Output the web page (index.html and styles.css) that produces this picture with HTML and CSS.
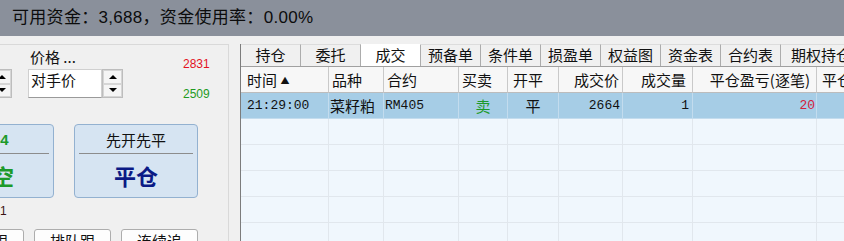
FILE: index.html
```html
<!DOCTYPE html>
<html>
<head>
  <meta charset="utf-8">
  <link rel="stylesheet" href="styles.css">
</head>
<body>
  <div class="topbar">可用资金：3,688，资金使用率：0.00%</div>

  <div class="main">
    <div class="order-panel">
      <div class="price-row">
        <div class="spin qty-spin">
          <div class="spin-btn"><i class="arrow-up"></i></div>
          <div class="spin-btn"><i class="arrow-down"></i></div>
        </div>
        <div class="price-col">
          <div class="price-label">价格 ...</div>
          <div class="combo">
            <div class="combo-text">对手价</div>
            <div class="spin">
              <div class="spin-btn"><i class="arrow-up"></i></div>
              <div class="spin-btn"><i class="arrow-down"></i></div>
            </div>
          </div>
        </div>
        <div class="limits">
          <span class="limit-up">2831</span>
          <span class="limit-down">2509</span>
        </div>
      </div>

      <div class="action-row">
        <div class="action-btn">
          <div class="btn-top green bold">2664</div>
          <div class="btn-main green">卖空</div>
        </div>
        <div class="action-btn">
          <div class="btn-top">先开先平</div>
          <div class="btn-main navy">平仓</div>
        </div>
      </div>

      <div class="qty-note">1</div>

      <div class="follow-row">
        <div class="follow-btn">对价跟</div>
        <div class="follow-btn">排队跟</div>
        <div class="follow-btn">连续追</div>
      </div>
    </div>

    <div class="trade-pane">
      <div class="tabs">
        <div class="tab">持仓</div>
        <div class="tab">委托</div>
        <div class="tab active">成交</div>
        <div class="tab">预备单</div>
        <div class="tab">条件单</div>
        <div class="tab">损盈单</div>
        <div class="tab">权益图</div>
        <div class="tab">资金表</div>
        <div class="tab">合约表</div>
        <div class="tab last">期权持仓</div>
      </div>

      <div class="grid">
        <div class="row head">
          <div class="cell pl6">时间 <span class="sort">▲</span></div>
          <div class="cell">品种</div>
          <div class="cell">合约</div>
          <div class="cell">买卖</div>
          <div class="cell pl5">开平</div>
          <div class="cell num">成交价</div>
          <div class="cell num pr6">成交量</div>
          <div class="cell num pr6">平仓盈亏(逐笔)</div>
          <div class="cell pl5">平仓盈亏(盯市)</div>
        </div>
        <div class="row selected">
          <div class="cell mono pl6">21:29:00</div>
          <div class="cell pl1">菜籽粕</div>
          <div class="cell mono pl1">RM405</div>
          <div class="cell center green">卖</div>
          <div class="cell center">平</div>
          <div class="cell mono num pr2">2664</div>
          <div class="cell mono num">1</div>
          <div class="cell mono num pr1 red">20</div>
          <div class="cell"></div>
        </div>
        <div class="row"><div class="cell"></div><div class="cell"></div><div class="cell"></div><div class="cell"></div><div class="cell"></div><div class="cell"></div><div class="cell"></div><div class="cell"></div><div class="cell"></div></div>
        <div class="row"><div class="cell"></div><div class="cell"></div><div class="cell"></div><div class="cell"></div><div class="cell"></div><div class="cell"></div><div class="cell"></div><div class="cell"></div><div class="cell"></div></div>
        <div class="row"><div class="cell"></div><div class="cell"></div><div class="cell"></div><div class="cell"></div><div class="cell"></div><div class="cell"></div><div class="cell"></div><div class="cell"></div><div class="cell"></div></div>
        <div class="row"><div class="cell"></div><div class="cell"></div><div class="cell"></div><div class="cell"></div><div class="cell"></div><div class="cell"></div><div class="cell"></div><div class="cell"></div><div class="cell"></div></div>
        <div class="row"><div class="cell"></div><div class="cell"></div><div class="cell"></div><div class="cell"></div><div class="cell"></div><div class="cell"></div><div class="cell"></div><div class="cell"></div><div class="cell"></div></div>
      </div>
    </div>
  </div>
</body>
</html>
```

FILE: styles.css
```css
* {
  box-sizing: border-box;
}
body {
  margin: 0;
  width: 844px;
  height: 241px;
  overflow: hidden;
  background: #f0f0f0;
  color: #111;
  font-family: "Noto Sans CJK SC", "Liberation Sans", sans-serif;
}

.topbar {
  height: 36px;
  background: #8a909b;
  padding-left: 12px;
  font-family: "Liberation Sans", "Noto Sans CJK SC", sans-serif;
  font-size: 17px;
  letter-spacing: 0.3px;
  line-height: 36px;
  color: #0c0c0c;
}

.main {
  display: flex;
  gap: 11px;
  margin-top: 8px;
  height: 197px;
}

/* left order panel */
.order-panel {
  width: 229px;
  flex: none;
  border-top: 1px solid #d9d9d9;
  border-right: 1px solid #d9d9d9;
  overflow: hidden;
}
.price-row {
  display: flex;
  height: 54px;
}
.spin {
  display: flex;
  flex-direction: column;
  width: 21px;
  height: 29px;
  flex: none;
  border: 1px solid #bdbdbd;
  background: #f3f3f3;
}
.spin-btn {
  flex: 1;
  display: flex;
  align-items: center;
  justify-content: center;
  border: 1px solid #d6d6d6;
  background: #f5f5f5;
}
.arrow-up {
  border-left: 4px solid transparent;
  border-right: 4px solid transparent;
  border-bottom: 4px solid #000;
}
.arrow-down {
  border-left: 4px solid transparent;
  border-right: 4px solid transparent;
  border-top: 4px solid #000;
}
.qty-spin {
  margin-left: -9px;
  margin-top: 24px;
}
.price-col {
  margin-left: 16px;
}
.price-label {
  height: 24px;
  padding: 3px 0 0 2px;
  font-size: 15px;
  line-height: 18px;
}
.combo {
  display: flex;
}
.combo-text {
  width: 74px;
  height: 29px;
  background: #fff;
  border: 1px solid #d0d0d0;
  border-bottom-color: #9a9a9a;
  padding: 1px 2px;
  font-size: 15px;
  line-height: 18px;
}
.limits {
  display: flex;
  flex-direction: column;
  gap: 16px;
  margin-left: 60px;
  padding-top: 12px;
  font-family: "Liberation Sans", sans-serif;
  font-size: 12px;
  line-height: 14px;
}
.limit-up {
  color: #e3121f;
}
.limit-down {
  color: #1f9a1f;
}

.action-row {
  display: flex;
  gap: 20px;
  margin-top: 25px;
  margin-left: -70px;
}
.action-btn {
  width: 124px;
  height: 74px;
  flex: none;
  display: flex;
  flex-direction: column;
  border: 1px solid #93b1d0;
  border-radius: 4px;
  background: #d6e4f2;
}
.btn-top {
  height: 29px;
  margin: 0 4px;
  padding-top: 2px;
  border-bottom: 1px solid #8c8c8c;
  text-align: center;
  font-size: 15px;
  line-height: 26px;
}
.btn-main {
  flex: 1;
  text-align: center;
  font-size: 22px;
  font-weight: bold;
  line-height: 42px;
}
.bold {
  font-weight: bold;
  font-family: "Liberation Sans", sans-serif;
}
.green {
  color: #1c9a2a;
}
.navy {
  color: #0b1a85;
}
.red {
  color: #d4203c;
}

.qty-note {
  margin-top: 6px;
  font-family: "Liberation Sans", sans-serif;
  font-size: 12px;
  line-height: 14px;
  color: #3a1212;
}
.follow-row {
  display: flex;
  gap: 10px;
  margin-top: 11px;
  margin-left: -53px;
}
.follow-btn {
  width: 77px;
  height: 24px;
  flex: none;
  border: 1px solid #adadad;
  border-radius: 3px;
  background: #fdfdfd;
  text-align: center;
  font-size: 15px;
  line-height: 22px;
}

/* right trade pane */
.trade-pane {
  flex: 1;
  min-width: 0;
  display: flex;
  flex-direction: column;
  border-left: 1px solid #7c7c7c;
  overflow: hidden;
}
.tabs {
  display: flex;
  height: 22px;
  flex: none;
}
.tab {
  width: 60px;
  flex: none;
  border-top: 1px solid #dcdcdc;
  border-right: 1px solid #acacac;
  text-align: center;
  font-size: 15px;
  line-height: 20px;
  white-space: nowrap;
}
.tab.active {
  background: #fff;
  border-top-color: #fff;
}
.tab.last {
  width: auto;
  padding-left: 10px;
  border-right: none;
}

.grid {
  flex: 1;
  border-top: 1px solid #a0a0a0;
  background: #f0f7fd;
  overflow: hidden;
}
.row {
  display: grid;
  grid-template-columns: 88px 55px 75px 49px 51px 64px 70px 124px 110px;
  height: 26px;
}
.cell {
  padding: 0 3px;
  border-right: 1px solid #e1e7ed;
  border-bottom: 1px solid #e1e7ed;
  font-size: 15px;
  line-height: 25px;
  white-space: nowrap;
  overflow: hidden;
}
.head .cell {
  background: #f7f7f7;
  border-right-color: #c9c9c9;
  border-bottom-color: #bcbcbc;
}
.selected .cell {
  background: #a6cde6;
  border-right-color: #c3dcee;
  border-bottom-color: #c3dcee;
}
.sort {
  font-size: 9px;
  vertical-align: 2px;
}
.mono {
  font-family: "Liberation Mono", "Noto Sans CJK SC", monospace;
  font-size: 13px;
}
.num {
  text-align: right;
}
.center {
  text-align: center;
}
.pl1 { padding-left: 1px; }
.pl5 { padding-left: 5px; }
.pl6 { padding-left: 6px; }
.pr1 { padding-right: 1px; }
.pr2 { padding-right: 2px; }
.pr6 { padding-right: 6px; }
```
